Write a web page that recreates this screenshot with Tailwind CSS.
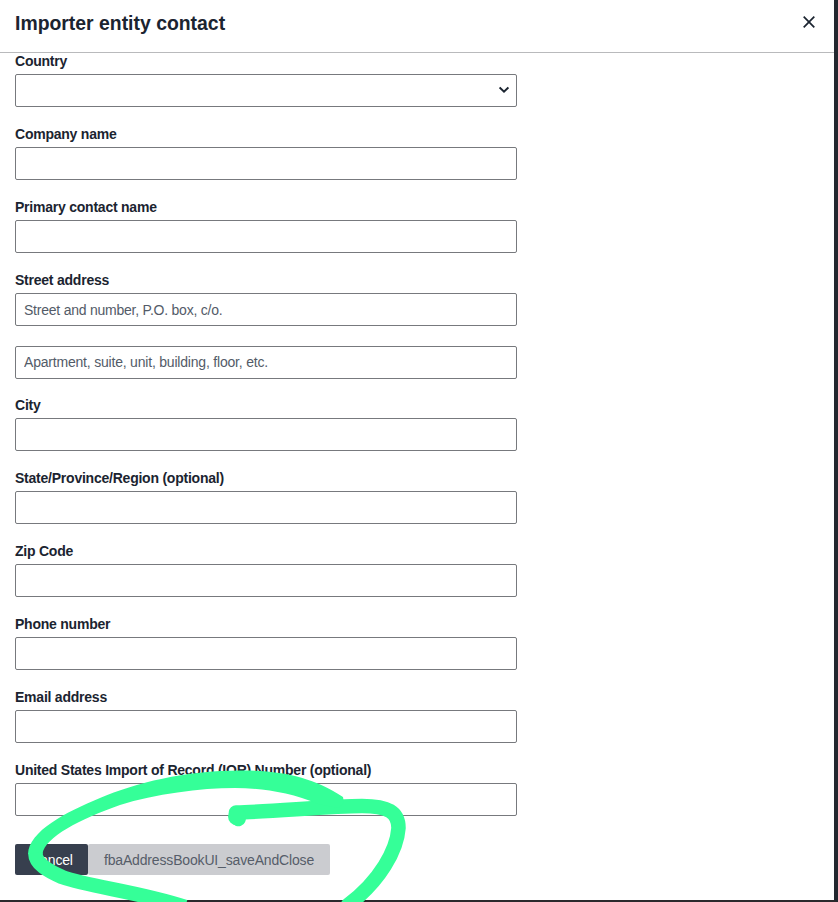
<!DOCTYPE html>
<html lang="en">
<head>
    <meta charset="UTF-8">
    <meta name="viewport" content="width=device-width, initial-scale=1.0">
    <title>Importer entity contact</title>
    <script src="https://cdn.jsdelivr.net/npm/@tailwindcss/browser@4"></script>
</head>
<body class="bg-white font-['Liberation_Sans',Arial,sans-serif] text-[#1b2430]">
    <div class="relative flex flex-col h-[902px] w-[838px] overflow-hidden border-r-4 border-b-2 border-r-[#232830] border-b-[#2b2a2d]">
        <!-- modal header -->
        <header class="flex shrink-0 h-[53px] justify-between border-b border-[#b9babc] pl-[15px] pr-[19px]">
            <h2 class="text-[19.4px] leading-[46px] font-bold whitespace-nowrap">Importer entity contact</h2>
            <button type="button" aria-label="Close" class="h-[44px]">
                <svg class="w-3 h-3" viewBox="0 0 12 12" fill="none" stroke="#1b2430" stroke-width="1.7">
                    <path d="M.7 .7l10.6 10.6M11.3 .7L.7 11.3" />
                </svg>
            </button>
        </header>

        <!-- contact form -->
        <form class="-mt-px ml-[15px] w-[502px] text-[14px] tracking-[-0.23px]">
            <div class="mb-[18px]">
                <label for="country" class="block mb-1 h-[18px] leading-[19px] font-bold">Country</label>
                <div class="relative">
                    <select id="country" class="block w-full h-[33px] appearance-none rounded-[2px] border border-[#77797d] bg-white px-2"></select>
                    <svg class="absolute right-2 top-[12px] w-[10px] h-[8px]" viewBox="0 0 10 8" fill="none" stroke="#1b2430" stroke-width="2">
                        <path d="M.6 1.4L5 5.6l4.4-4.2" />
                    </svg>
                </div>
            </div>
            <div class="mb-[18px]">
                <label for="company" class="block mb-1 h-[18px] leading-[19px] font-bold">Company name</label>
                <input id="company" type="text" class="block w-full h-[33px] rounded-[2px] border border-[#77797d] px-2">
            </div>
            <div class="mb-[18px]">
                <label for="contact" class="block mb-1 h-[18px] leading-[19px] font-bold">Primary contact name</label>
                <input id="contact" type="text" class="block w-full h-[33px] rounded-[2px] border border-[#77797d] px-2">
            </div>
            <div class="mb-[17px]">
                <label for="street" class="block mb-1 h-[18px] leading-[19px] font-bold">Street address</label>
                <input id="street" type="text" placeholder="Street and number, P.O. box, c/o." class="block w-full h-[33px] rounded-[2px] border border-[#77797d] px-2 placeholder:text-[#535b68]">
                <input type="text" placeholder="Apartment, suite, unit, building, floor, etc." class="block mt-5 w-full h-[33px] rounded-[2px] border border-[#77797d] px-2 pb-px tracking-[-0.2px] placeholder:text-[#535b68]">
            </div>
            <div class="mb-[18px]">
                <label for="city" class="block mb-1 h-[18px] leading-[19px] font-bold">City</label>
                <input id="city" type="text" class="block w-full h-[33px] rounded-[2px] border border-[#77797d] px-2">
            </div>
            <div class="mb-[18px]">
                <label for="state" class="block mb-1 h-[18px] leading-[19px] font-bold">State/Province/Region (optional)</label>
                <input id="state" type="text" class="block w-full h-[33px] rounded-[2px] border border-[#77797d] px-2">
            </div>
            <div class="mb-[18px]">
                <label for="zip" class="block mb-1 h-[18px] leading-[19px] font-bold">Zip Code</label>
                <input id="zip" type="text" class="block w-full h-[33px] rounded-[2px] border border-[#77797d] px-2">
            </div>
            <div class="mb-[18px]">
                <label for="phone" class="block mb-1 h-[18px] leading-[19px] font-bold">Phone number</label>
                <input id="phone" type="text" class="block w-full h-[33px] rounded-[2px] border border-[#77797d] px-2">
            </div>
            <div class="mb-[18px]">
                <label for="email" class="block mb-1 h-[18px] leading-[19px] font-bold">Email address</label>
                <input id="email" type="text" class="block w-full h-[33px] rounded-[2px] border border-[#77797d] px-2">
            </div>
            <div>
                <label for="ior" class="block mb-1 h-[18px] leading-[19px] font-bold">United States Import of Record (IOR) Number (optional)</label>
                <input id="ior" type="text" class="block w-full h-[33px] rounded-[2px] border border-[#77797d] px-2">
            </div>
            <div class="flex mt-7 h-[31px] tracking-[-0.16px]">
                <button type="button" class="w-[73px] rounded-[2px] bg-[#373f4e] pt-px text-white">Cancel</button>
                <button type="button" disabled class="w-[242px] rounded-[2px] bg-[#cbccd0] pt-px text-[#565d69]">fbaAddressBookUI_saveAndClose</button>
            </div>
        </form>
    </div>

    <!-- green marker drawn over the buttons -->
    <svg class="absolute left-0 top-0 w-[838px] h-[902px] pointer-events-none" viewBox="0 0 838 902" fill="none" stroke="#35ff98" stroke-width="14.5" stroke-linejoin="round">
        <path stroke-linecap="round" d="M238.500 819L236 812.500C270 812 330 806 362 806C388 806 398.500 812 398.500 828C397 850 380 881 348 905" />
        <!-- upper arc is filled, it gets wider to the right -->
        <path fill="#35ff98" stroke="none" d="M28 854C29 831 66 812 100 798C135 783 185 770.500 240 770.500C283 770.500 312 777 343 797L344 803L338 808L318 804C290 792 260 788 235 788C200 788 155 794 120 805C80 819 45 837 42.500 854Z" />
        <path d="M35.300 853C35.500 864 48 871 62 877C90 887 140 892 185 907" />
        <circle cx="237" cy="816.500" r="9" fill="#35ff98" stroke="none" />
    </svg>
</body>
</html>
